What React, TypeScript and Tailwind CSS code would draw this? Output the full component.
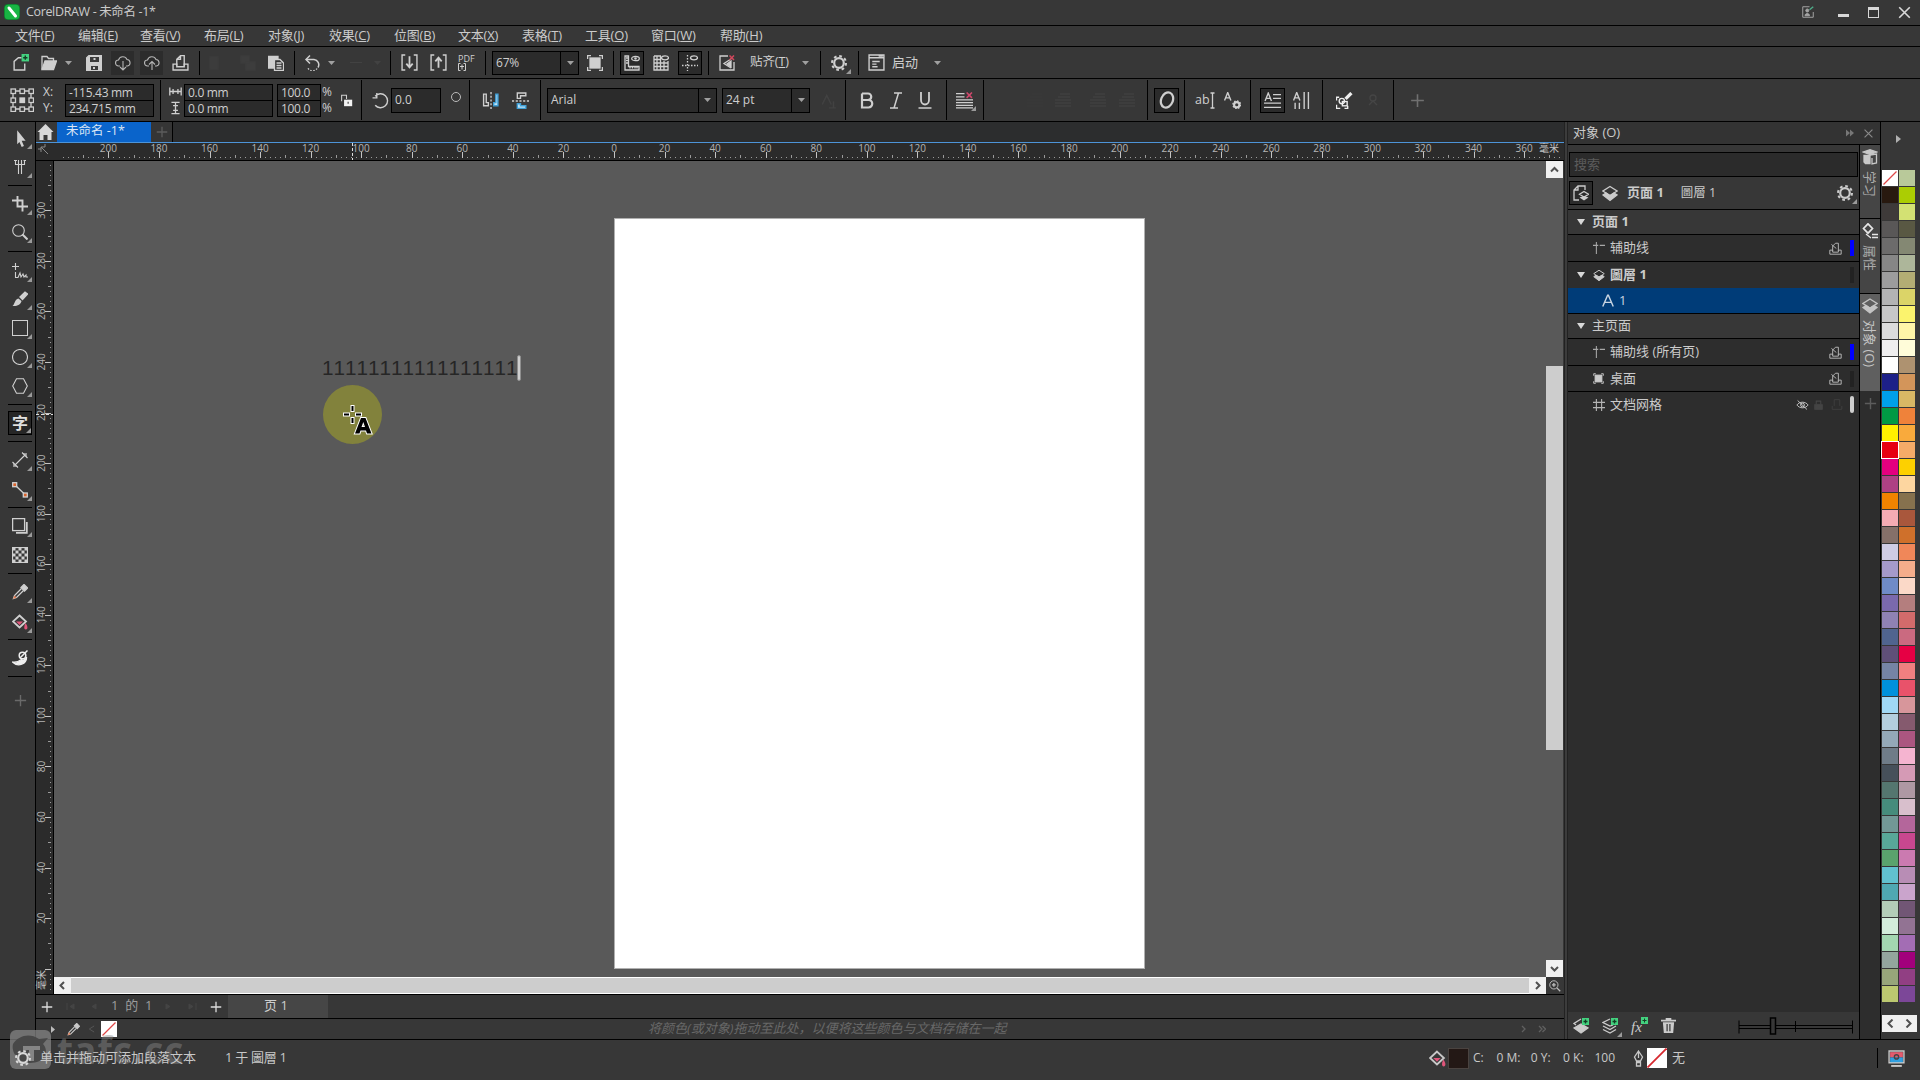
import React from "react";

const K = "'Noto Sans CJK SC', sans-serif";

type IconProps = { children: React.ReactNode; className?: string; box?: string; fill?: string };

const Ico = ({ children, className = "w-4 h-4", box = "0 0 16 16", fill = "none" }: IconProps) => (
  <svg className={`shrink-0 ${className}`} viewBox={box} fill={fill} stroke="currentColor" strokeWidth={1.3}>
    {children}
  </svg>
);

const Sep = ({ className = "" }: { className?: string }) => <div className={`w-px shrink-0 bg-black ${className}`} />;

const Caret = ({ className = "" }: { className?: string }) => (
  <svg className={`h-[4px] w-[7px] shrink-0 ${className}`} viewBox="0 0 7 4">
    <path d="M0 0H7L3.5 4Z" fill="#a0a0a0" />
  </svg>
);

const Corner = () => (
  <svg className="absolute right-0 bottom-[1px] h-[5px] w-[5px]" viewBox="0 0 5 5">
    <path d="M5 0V5H0Z" fill="#9a9a9a" />
  </svg>
);

const Gear = ({ className = "w-4 h-4" }: { className?: string }) => (
  <Ico className={className}>
    <circle cx="8" cy="8" r="4.800" strokeWidth="2.200" />
    <circle cx="8" cy="8" r="7" strokeWidth="2" strokeDasharray="2.75 2.75" />
  </Ico>
);

const Layers = ({ className = "w-4 h-4" }: { className?: string }) => (
  <Ico className={className}>
    <path d="M8 1L15 5.5L8 10L1 5.5Z" />
    <path d="M1 9.5L4 7.6L8 10.2L12 7.6L15 9.5L8 15Z" fill="currentColor" />
  </Ico>
);

const Printer = ({ className = "w-4 h-4" }: { className?: string }) => (
  <Ico className={className}>
    <path d="M1 15V9.500H4.500V12H11.500V9.500H15V15Z" />
    <path d="M4.500 11V5L8 1.500H11.500V11M8 1.500V5H4.500" />
  </Ico>
);

const Bucket = ({ className = "w-4 h-4" }: { className?: string }) => (
  <Ico className={className}>
    <path d="M7.500 1.500L14 7.500L7.500 13.500L1 7.500Z" strokeWidth="1.800" />
    <path d="M4 7.500H11L7.500 11Z" fill="#e0567b" stroke="none" />
    <path d="M13.500 9C16 12 16 15.500 13.800 15.500S12 12 13.500 9Z" fill="#e0567b" stroke="none" />
  </Ico>
);

const Eyedropper = ({ className = "w-4 h-4" }: { className?: string }) => (
  <Ico className={className}>
    <path d="M9.500 4.500L2.500 11.500L1.500 14.500L4.500 13.500L11.500 6.500" />
    <path d="M9 3.500L12.500 7L15.500 4L12 0.500Z" fill="currentColor" />
    <path d="M1 15L2.500 11.500L4.500 13.500Z" fill="#e57c52" stroke="none" />
  </Ico>
);

const Plus = ({ className = "w-4 h-4" }: { className?: string }) => (
  <Ico className={className}>
    <path d="M8 2V14M2 8H14" strokeWidth="1.500" />
  </Ico>
);

const MENUS: [string, string][] = [
  ["文件", "F"], ["编辑", "E"], ["查看", "V"], ["布局", "L"], ["对象", "J"], ["效果", "C"],
  ["位图", "B"], ["文本", "X"], ["表格", "T"], ["工具", "O"], ["窗口", "W"], ["帮助", "H"],
];

const PALETTE: [string, string][] = [
  ["none", "#b9c99a"], ["#28190f", "#abcd03"], ["#3e3a39", "#d3e173"], ["#595757", "#595843"],
  ["#6c6b6b", "#848873"], ["#868686", "#adb69a"], ["#9c9c9d", "#b3ad74"], ["#b3b3b4", "#dbd468"],
  ["#c7c7c8", "#fbf36d"], ["#dbdbdc", "#fff5a8"], ["#efeeef", "#fffcd9"], ["#ffffff", "#ae9270"],
  ["#1d2088", "#d3955a"], ["#00a0e9", "#d8b865"], ["#009944", "#ef823a"], ["#fff100", "#f9aa3c"],
  ["#e60012", "#f5ab68"], ["#e4007f", "#fdd000"], ["#ae4184", "#fdd6a0"], ["#f08300", "#86714e"],
  ["#f4abb3", "#a9573c"], ["#857069", "#cf702b"], ["#cfcce4", "#f08759"], ["#a59aca", "#f5ad8b"],
  ["#6f8bc7", "#fbd9c8"], ["#7a69ad", "#b47e7e"], ["#8f82b4", "#d26b6b"], ["#50648f", "#ca6a80"],
  ["#5f4f78", "#e60044"], ["#7584a5", "#f07f80"], ["#0091db", "#e9526a"], ["#a0d8f5", "#d7969b"],
  ["#b3cede", "#855a6e"], ["#94a9b8", "#ab5680"], ["#6f7c88", "#f5b4d0"], ["#46505a", "#d59ab5"],
  ["#54766f", "#ae98a3"], ["#468c7c", "#d8bfcc"], ["#729896", "#b4669b"], ["#58a898", "#c8478f"],
  ["#5aa36d", "#cb7ab0"], ["#61c1cf", "#b88db5"], ["#4fa8b2", "#caa4cc"], ["#b3cdb8", "#715675"],
  ["#d3ecdb", "#927393"], ["#a3d6b1", "#a36db4"], ["#93a59d", "#a2007c"], ["#97a57a", "#913f83"],
  ["#bcc870", "#7c4798"],
];

const PX = 2.528;

function TopRuler() {
  const ticks: React.ReactNode[] = [];
  for (let mm = -220; mm <= 376; mm += 2) {
    const x = 578 + mm * PX;
    if (x < 22) continue;
    const major = mm % 20 === 0;
    const h = major ? 6 : mm % 10 === 0 ? 3 : 1;
    ticks.push(<rect key={mm} x={Math.round(x)} y={15 - h} width={1} height={h} fill={major ? "#c4c4c4" : "#9a9a9a"} />);
    if (major && mm > -220 && mm < 361)
      ticks.push(
        <text key={`t${mm}`} x={x} y={9} fontSize="10" textAnchor="middle" fill="#b4b4b4">{Math.abs(mm)}</text>
      );
  }
  return (
    <svg className="block h-[17px] w-[1527px] overflow-visible" viewBox="0 0 1527 17">
      {ticks}
      <text x="1503" y="9" fontSize="10" fill="#c4c4c4" style={{ fontFamily: K }}>毫米</text>
      <path d="M5 4L12 11M5 4H9M5 4V9M9 1V4M2 6H5" stroke="#8a8a8a" fill="none" />
      <path d="M316.500 0V17" stroke="#ddd" strokeDasharray="3 2" />
    </svg>
  );
}

function SideRuler() {
  const ticks: React.ReactNode[] = [];
  for (let mm = -8; mm <= 318; mm += 2) {
    const y = 807.700 - mm * PX;
    const major = mm % 20 === 0;
    const w = major ? 6 : mm % 10 === 0 ? 3 : 1;
    ticks.push(<rect key={mm} x={15 - w} y={Math.round(y)} width={w} height={1} fill={major ? "#c4c4c4" : "#9a9a9a"} />);
    if (major && mm > 0)
      ticks.push(
        <text key={`t${mm}`} transform={`translate(9 ${y}) rotate(-90)`} fontSize="10" textAnchor="middle" fill="#b4b4b4">{mm}</text>
      );
  }
  return (
    <svg className="block h-[833px] w-[17px] overflow-visible" viewBox="0 0 17 833">
      {ticks}
      <path d="M0 253.500H17" stroke="#ddd" strokeDasharray="3 2" />
      <text transform="translate(9 829) rotate(-90)" fontSize="10" fill="#c4c4c4" style={{ fontFamily: K }}>毫米</text>
    </svg>
  );
}

const Tool = ({ children, corner = true, className = "" }: { children: React.ReactNode; corner?: boolean; className?: string }) => (
  <div className={`relative flex h-6 w-6 shrink-0 items-center justify-center ${className}`}>
    {children}
    {corner && <Corner />}
  </div>
);

const ToolSep = ({ className = "" }: { className?: string }) => <div className={`h-px w-6 shrink-0 bg-black ${className}`} />;

function Toolbox() {
  return (
    <div className="flex w-[36px] shrink-0 flex-col border-r border-black pt-[4px] pl-2 text-[#d0d0d0]">
      <Tool>
        <Ico className="h-[18px] w-[18px]"><path d="M5.500 1L13 10.500H9.500L11.500 15L9.500 16L7.500 11.500L5.500 13.500Z" fill="currentColor" stroke="none" /></Ico>
      </Tool>
      <Tool className="mt-[5px]">
        <Ico><path d="M3.500 1V5.500H12.500V1M2 1.500H5M6.500 1V5M9.500 1V5M11.500 1.500H14M6.500 5.500V15M9.500 5.500V15" strokeWidth="1.100" /></Ico>
      </Tool>
      <ToolSep className="mt-[6px]" />
      <Tool className="mt-[6px]">
        <Ico><path d="M0 4.500H5.500M5.500 0V10.500H10.500V15.500M5.500 4.500H10.500V10.500H16" strokeWidth="1.900" /></Ico>
      </Tool>
      <Tool className="mt-1">
        <Ico><circle cx="6.500" cy="6.500" r="5.800" strokeWidth="1.100" /><path d="M10.500 10.500L15.500 15.500" strokeWidth="2" /></Ico>
      </Tool>
      <ToolSep className="mt-[7px]" />
      <Tool className="mt-[7px]">
        <Ico><path d="M3.500 0V7M0 3.500H7M3.500 9V14.500H6L8 10L9 14L11 11L12 14L14 12V14H16" strokeWidth="1.100" /></Ico>
      </Tool>
      <Tool className="mt-[4px]">
        <Ico><path d="M8 6L13 1L15.500 3L10.500 8.500Z" fill="currentColor" /><path d="M6.500 7.500L9.500 10C9 13.500 5 15.500 0.500 15C3 13 2.500 8.500 6.500 7.500Z" fill="currentColor" stroke="none" /></Ico>
      </Tool>
      <Tool className="mt-[5px]"><Ico><rect x="0.500" y="0.500" width="15" height="15" strokeWidth="1" /></Ico></Tool>
      <Tool className="mt-[5px]"><Ico><circle cx="8" cy="8" r="7.500" strokeWidth="1.100" /></Ico></Tool>
      <Tool className="mt-[5px]"><Ico><path d="M4.500 0.800H11.500L15.300 8L11.500 15.200H4.500L0.700 8Z" strokeWidth="1.100" /></Ico></Tool>
      <ToolSep className="mt-[6px]" />
      <Tool className="mt-[6px] border border-black bg-[#262626] text-[16px] leading-none font-bold text-[#e0e0e0]">字</Tool>
      <ToolSep className="mt-[6px]" />
      <Tool className="mt-[6px]">
        <Ico><path d="M2.500 13.500L13.500 2.500M0.500 10L6 15.500M10 0.500L15.500 6" strokeWidth="1.100" /><path d="M1 10.500V15H5.500ZM15 5.500V1H10.500Z" fill="currentColor" stroke="none" opacity="0.600" /></Ico>
      </Tool>
      <Tool className="mt-[6px]">
        <Ico><path d="M3 3L13.500 13" /><rect x="0.700" y="0.700" width="4" height="4" fill="#d9632c" /><rect x="11.300" y="11" width="4" height="4" fill="#d9632c" /></Ico>
      </Tool>
      <ToolSep className="mt-[5px]" />
      <Tool className="mt-[6px]">
        <Ico><rect x="0.600" y="0.600" width="12" height="12" /><path d="M14.800 4V14.800H4" strokeWidth="1.800" /></Ico>
      </Tool>
      <Tool corner={false} className="mt-[5px]">
        <Ico className="h-4 w-4">
          <rect x="0.500" y="0.500" width="15" height="15" />
          {[0, 1, 2, 3, 4].map((r) =>
            [0, 1, 2, 3, 4].map((c) => (r + c) % 2 === 0 && <rect key={`${r}${c}`} x={0.500 + c * 3} y={0.500 + r * 3} width="3" height="3" fill="currentColor" stroke="none" />)
          )}
        </Ico>
      </Tool>
      <ToolSep className="mt-[6px]" />
      <Tool className="mt-[6px]"><Eyedropper /></Tool>
      <Tool className="mt-[6px]"><Bucket /></Tool>
      <ToolSep className="mt-[5px]" />
      <Tool corner={false} className="mt-[6px] text-[#eee]">
        <Ico><path d="M0.500 12C6 17.500 15 14 14.500 7C13.500 9.500 11 11 9.500 9.500C6 12 4 13 0.500 12Z" fill="currentColor" /><circle cx="10.500" cy="5.500" r="3.300" strokeWidth="1.500" /><path d="M8 8L15.500 0.500" strokeWidth="1.500" /></Ico>
      </Tool>
      <ToolSep className="mt-[6px]" />
      <Tool corner={false} className="mt-[11px] text-[#6a6a6a]"><Plus className="h-[15px] w-[15px]" /></Tool>
    </div>
  );
}

function StandardBar() {
  return (
    <div className="flex h-[32px] shrink-0 items-center border-b border-black text-[#cfcfcf]">
      <Ico className="ml-3 h-[17px] w-[17px]">
        <path d="M9 3.500H6L2 7V15H12V9" /><rect x="9" y="0" width="7" height="7" fill="#43d17f" stroke="none" /><path d="M12.500 1.500V5.500M10.500 3.500H14.500" stroke="#153d25" />
      </Ico>
      <Ico className="ml-[12px] h-4 w-4"><path d="M1 14.500V1.500H6L7.500 3.500H12.500V6" /><path d="M1 14.500L4 6H15.500L12.500 14.500Z" fill="currentColor" /></Ico>
      <Caret className="ml-[8px]" />
      <Ico className="ml-[14px] h-4 w-4"><path d="M0.500 3L3 0.500H15.500V15.500H0.500Z" fill="currentColor" /><path d="M4 2H13V7H4ZM5 11H12V15H5Z" fill="#3a3a3a" stroke="none" /><path d="M8.500 3V5M8 12V14" strokeWidth="2" /></Ico>
      <div className="ml-[9px] flex h-6 w-[23px] items-center justify-center bg-[#2c2c2c]"><Ico className="h-4 w-4"><path d="M5 11H3.500A3 3 0 0 1 3.500 5A4.500 4.500 0 0 1 12 4.500A3.300 3.300 0 0 1 12.500 11H11M8 6V15M5 12L8 15L11 12" strokeWidth="1.100" stroke="#b5b5b5" /></Ico></div>
      <div className="ml-[6px] flex h-6 w-[23px] items-center justify-center bg-[#2c2c2c]"><Ico className="h-4 w-4"><path d="M5 11H3.500A3 3 0 0 1 3.500 5A4.500 4.500 0 0 1 12 4.500A3.300 3.300 0 0 1 12.500 11H11M8 15V6.500M5 9.500L8 6.500L11 9.500" strokeWidth="1.100" stroke="#b5b5b5" /></Ico></div>
      <Printer className="ml-[9px] h-[17px] w-[17px]" />
      <Sep className="ml-[10px] h-6" />
      <Ico className="ml-[8px] h-4 w-4 text-[#3c3c3c]"><path d="M2 2H10V14H2Z" fill="currentColor" /></Ico>
      <Ico className="ml-[16px] h-4 w-4 text-[#3d3d3d]"><path d="M1 1H9V8H1ZM6 7H15V15H6Z" fill="currentColor" /></Ico>
      <Ico className="ml-[12px] h-4 w-4"><path d="M0.500 1.500H10V4H6V13H0.500Z" fill="currentColor" /><path d="M6.500 4.500H12L15.500 8V15.500H6.500Z" fill="#333" /><path d="M8.500 8H13.500M8.500 10.500H13.500M8.500 13H13.500" /></Ico>
      <Sep className="ml-[10px] h-6" />
      <Ico className="ml-[9px] h-4 w-4"><path d="M2 4.500H10A5.300 5.300 0 0 1 14 12.500" strokeWidth="1.500" /><path d="M13 13.500A5.300 5.300 0 0 1 3.500 12" strokeDasharray="1.500 1.500" /><path d="M6 0.500L2 4.500L6 8.500" strokeWidth="1.500" /></Ico>
      <Caret className="ml-[8px]" />
      <div className="ml-[15px] h-px w-3 bg-[#424242]" />
      <Caret className="ml-[12px] opacity-10" />
      <Sep className="ml-[9px] h-6" />
      <Ico className="ml-[10px] h-[17px] w-[17px]"><path d="M4 1H1V15H4M12 1H15V15H12" /><path d="M8 2V12M5 9L8 12.500L11 9" strokeWidth="1.700" /></Ico>
      <Ico className="ml-[12px] h-[17px] w-[17px]"><path d="M4 1H1V15H4M12 1H15V15H12" /><path d="M8 13V3.500M5 7L8 3.500L11 7" strokeWidth="1.700" /></Ico>
      <div className="ml-[11px] flex w-[18px] flex-col items-start">
        <span className="text-[9px] leading-[9px]">PDF</span>
        <Ico className="h-[8px] w-[8px]"><path d="M5 1H1V15H5M11 1H15V15H11M8 3V13M4 7H12" strokeWidth="2" /></Ico>
      </div>
      <Sep className="ml-[9px] h-6" />
      <div className="ml-[6px] flex h-6 w-[87px] items-center border border-black bg-[#2b2b2b]">
        <span className="w-[67px] pl-[3px] text-[12px] tracking-[-0.2px]">67%</span>
        <Sep className="h-full" />
        <Caret className="ml-[6px]" />
      </div>
      <Ico className="ml-[8px] h-4 w-4"><rect x="3" y="3" width="10" height="10" fill="currentColor" /><path d="M0.600 4V0.600H4M12 0.600H15.400V4M15.400 12V15.400H12M4 15.400H0.600V12" /></Ico>
      <Sep className="ml-[10px] h-6" />
      <div className="ml-[6px] flex h-6 w-6 items-center justify-center border border-black bg-[#2b2b2b]">
        <Ico className="h-4 w-4"><path d="M1 1H4.500V11.500H15V15H1Z" /><path d="M2 3H4M2 5.500H4M2 8H4M6 13.500V12M8.500 13.500V12M11 13.500V12M13 13.500V12" /><ellipse cx="11.500" cy="3.500" rx="3.800" ry="2.200" /><circle cx="11.500" cy="3.500" r="0.700" /></Ico>
      </div>
      <Ico className="ml-[9px] h-4 w-4"><path d="M1 1V15H15V6M1 1H8M4 1V15M7.500 1V15M11 6V15M1 4.500H8M1 8H15M1 11.500H15" /><ellipse cx="12" cy="2.800" rx="3.500" ry="2" /></Ico>
      <div className="ml-[9px] flex h-6 w-6 items-center justify-center border border-black bg-[#2b2b2b]">
        <Ico className="h-4 w-4"><path d="M5.500 0V16M0 10.500H16" strokeDasharray="1.500 1.500" /><ellipse cx="12" cy="2.800" rx="3.500" ry="2" /></Ico>
      </div>
      <Sep className="ml-[6px] h-6" />
      <Ico className="ml-[10px] h-4 w-4"><path d="M9 1H1V15H15V7" /><path d="M12 4L5 8.500L12 13" /><path d="M12 6V12L8 9Z" fill="currentColor" /><path d="M10.500 0.500L15 5M15 0.500L10.500 5" stroke="#d0485c" strokeWidth="1.500" /></Ico>
      <span className="ml-[15px] w-[41px] text-[12.500px] whitespace-nowrap tracking-[-0.1px]">贴齐(<u>T</u>)</span>
      <Caret className="ml-[11px]" />
      <Sep className="ml-[11px] h-6" />
      <div className="relative ml-[10px] flex h-6 w-[20px] items-center"><Gear className="h-[16px] w-[16px]" /><Corner /></div>
      <Sep className="ml-[7px] h-6" />
      <Ico className="ml-[9px] h-[17px] w-[17px]"><path d="M1 1H15V15H1ZM1 3.500H15M10 2H14M4 7H11M4 9.500H8M4 12H9" /></Ico>
      <span className="ml-[7px] w-[26px] text-[13px]">启动</span>
      <Caret className="ml-[16px]" />
    </div>
  );
}

const Box = ({ children, className = "" }: { children: React.ReactNode; className?: string }) => (
  <div className={`flex shrink-0 items-center border border-black bg-[#2b2b2b] text-[12px] whitespace-nowrap ${className}`}>{children}</div>
);

const Pair = ({ a, b, className }: { a: string; b: string; className: string }) => (
  <div className={`flex h-[33px] shrink-0 flex-col border border-black bg-[#2b2b2b] text-[12px] leading-[15px] tracking-[-0.3px] whitespace-nowrap ${className}`}>
    <span className="h-4 border-b border-black pl-[3px]">{a}</span>
    <span className="pl-[3px]">{b}</span>
  </div>
);

const Lines = ({ className }: { className: string }) => (
  <Ico className={`h-4 w-4 text-[#404040] ${className}`}><path d="M5 2H15M3 5H15M0 8H16M0 11H16M0 14H16" /></Ico>
);

function PropertyBar() {
  return (
    <div className="flex h-[43px] shrink-0 items-center border-b border-black text-[#cfcfcf]">
      <Ico className="ml-[10px] h-6 w-6" box="0 0 24 24">
        {[0, 1, 2].map((r) =>
          [0, 1, 2].map((c) => <rect key={`${r}${c}`} x={1 + c * 9} y={1 + r * 9} width="4.500" height="4.500" fill={r === 1 && c === 1 ? "currentColor" : "none"} />)
        )}
        <path d="M6 3H10M15 3H19M6 21H10M15 21H19M3 6V10M3 15V19M21 6V10M21 15V19" />
      </Ico>
      <div className="ml-[9px] w-[22px] text-[12px] leading-[16px]">X:<br />Y:</div>
      <Pair className="w-[89px]" a="-115.43 mm" b="234.715 mm" />
      <Sep className="ml-[6px] h-[40px]" />
      <div className="ml-[8px] flex flex-col items-center gap-[3px]">
        <Ico className="h-[13px] w-[13px]"><path d="M1 3V13M15 3V13M1 8H15M5 5V11M11 5V11" strokeWidth="1.600" /></Ico>
        <Ico className="h-[14px] w-[13px]"><path d="M3 1H13M3 15H13M8 1V15M5 5H11M5 11H11" strokeWidth="1.600" /></Ico>
      </div>
      <Pair className="ml-[2px] w-[89px]" a="0.0 mm" b="0.0 mm" />
      <Pair className="ml-[4px] w-[44px]" a="100.0" b="100.0" />
      <div className="ml-[1px] w-[13px] text-[12px] leading-[16px]">%<br />%</div>
      <Ico className="ml-[5px] h-[15px] w-[13px]"><path d="M2 9V1.500H8V6" /><rect x="5" y="7" width="10" height="8" fill="#f2f2f2" stroke="none" /><path d="M10 9.500V12" stroke="#333" /></Ico>
      <Sep className="ml-[8px] h-[40px]" />
      <Ico className="ml-[10px] h-[17px] w-[17px]"><path d="M3 4A6.600 6.600 0 1 1 3 12.500M0.500 5.500H4.500V1" /></Ico>
      <Box className="ml-[2px] h-[25px] w-[50px] pl-[3px]">0.0</Box>
      <div className="mb-[6px] ml-[10px] h-[10px] w-[10px] rounded-full border border-[#bbb]" />
      <Sep className="ml-[8px] h-[40px]" />
      <Ico className="ml-[12px] h-[17px] w-[17px]"><path d="M1.500 2V13H6V10H4V2Z" /><path d="M8.500 0V16" strokeDasharray="2 1.500" /><path d="M15 2V13H11V10H13V2Z" fill="#bfe2f5" stroke="#3f9fd6" /></Ico>
      <Ico className="ml-[13px] h-[17px] w-[17px]"><path d="M13 1H5V6H8V3.500H13Z" /><path d="M0 8.500H16" strokeDasharray="2 1.500" /><path d="M5 11H8V13H13V15.500H5Z" fill="#bfe2f5" stroke="#3f9fd6" /></Ico>
      <Sep className="ml-[11px] h-[40px]" />
      <Box className="ml-[6px] h-[25px] w-[170px]"><span className="w-[150px] pl-[3px]">Arial</span><Sep className="h-full" /><Caret className="ml-[5px]" /></Box>
      <Box className="ml-[5px] h-[25px] w-[88px]"><span className="w-[68px] pl-[3px]">24 pt</span><Sep className="h-full" /><Caret className="ml-[6px]" /></Box>
      <Ico className="ml-[9px] h-[18px] w-[20px] text-[#424242]"><path d="M2 12L6 4L10 12M8 15H14M12 9V15" /></Ico>
      <Sep className="ml-[6px] h-[40px]" />
      <Ico className="ml-[14px] h-[17px] w-[14px]" box="0 0 14 17"><path d="M2 1.500H8A3.200 3.200 0 0 1 8 8H2V1.500M2 8H8.500A3.600 3.600 0 0 1 8.500 15.500H2V8" strokeWidth="2.200" /></Ico>
      <Ico className="ml-[15px] h-[17px] w-[14px]" box="0 0 14 17"><path d="M5 1H13M1 16H9M9.500 1L5 16" strokeWidth="1.500" /></Ico>
      <Ico className="ml-[15px] h-[17px] w-[14px]" box="0 0 14 17"><path d="M3 0V8A4 4.500 0 0 0 11 8V0" strokeWidth="1.800" /><path d="M0.500 16H13.500" strokeWidth="1.500" /></Ico>
      <Sep className="ml-[14px] h-[40px]" />
      <div className="relative ml-[9px] flex h-6 w-[20px] items-center">
        <Ico className="h-[17px] w-[17px]"><path d="M0 1.500H8M0 4.500H8M0 7.500H16M0 10H16M0 12.500H16M0 15H16" strokeWidth="1.200" /><path d="M10 0.500L15 5.500M15 0.500L10 5.500" stroke="#d0486c" strokeWidth="1.500" /></Ico>
        <Corner />
      </div>
      <Sep className="ml-[7px] h-[40px]" />
      <Lines className="ml-[43px] opacity-30" />
      <Lines className="ml-[12px]" />
      <Lines className="ml-[19px]" />
      <Lines className="ml-[13px]" />
      <Sep className="ml-[12px] h-[40px]" />
      <Box className="ml-[6px] h-[25px] w-[25px] justify-center"><Ico className="h-[18px] w-[18px]"><ellipse cx="8" cy="8" rx="5.200" ry="7" transform="rotate(22 8 8)" strokeWidth="2" /></Ico></Box>
      <Sep className="ml-[5px] h-[40px]" />
      <span className="ml-[10px] flex w-[18px] items-center text-[12.500px] leading-none">ab<Ico className="h-[17px] w-[5px]" box="0 0 5 17"><path d="M0.500 1H4.500M2.500 1V16M0.500 16H4.500" /></Ico></span>
      <Ico className="ml-[11px] h-[17px] w-[17px]"><path d="M0.500 8L3.500 0.500L6.500 8M1.500 5.500H5.500" /><circle cx="12" cy="12" r="2.500" strokeWidth="2" /><circle cx="12" cy="12" r="3.600" strokeDasharray="1.400 1.400" /></Ico>
      <Sep className="ml-[9px] h-[40px]" />
      <Box className="ml-[9px] h-[25px] w-[25px] justify-center"><Ico className="h-[17px] w-[17px]"><path d="M1 8.500L4 1L7 8.500M2 6H6M8.500 2.500H16M8.500 6H16M0 10.500H16M0 14.500H16" /></Ico></Box>
      <Ico className="ml-[8px] h-[17px] w-[17px]"><path d="M0.500 8L3.500 0.500L6.500 8M1.500 5.500H5.500M2 10V16M6 10V16M10.500 0V16M14.500 0V16" /></Ico>
      <Sep className="ml-[12px] h-[40px]" />
      <Ico className="ml-[13px] h-[17px] w-[17px] text-[#eee]"><path d="M0.500 8V5H3M0.500 12V15.500H4M8 15.500H11V13" /><circle cx="5.500" cy="8.500" r="2.500" /><rect x="6" y="9" width="4.500" height="4" /><path d="M9 6.500L14.500 1" strokeWidth="3" /></Ico>
      <Ico className="ml-[12px] h-4 w-4 text-[#454545]"><circle cx="8" cy="6" r="3" /><path d="M4 13L8 9L12 13" /></Ico>
      <Sep className="ml-[12px] h-[40px]" />
      <Plus className="ml-[15px] h-[17px] w-[17px] text-[#707070]" />
    </div>
  );
}

const ScrollArrow = ({ d, className }: { d: string; className: string }) => (
  <div className={`flex shrink-0 items-center justify-center bg-[#f0f0f0] text-[#505050] ${className}`}>
    <Ico className="h-[9px] w-[9px]" box="0 0 9 9"><path d={d} strokeWidth="2" /></Ico>
  </div>
);

const Nul = ({ className }: { className: string }) => (
  <svg className={`block shrink-0 bg-white ${className}`} viewBox="0 0 16 16"><path d="M1.500 14.500L14.500 1.500" stroke="#e04848" strokeWidth="1.200" /></svg>
);

function Canvas() {
  return (
    <div className="relative h-[816px] w-[1492px] overflow-hidden bg-[#595959]">
      <div className="absolute top-[57px] left-[560px] h-[751px] w-[531px] border border-[#b0b0b0] bg-white" />
      <span className="absolute top-[194px] left-[268px] text-[20.700px] leading-[26px] whitespace-nowrap text-[#262626] [font-kerning:none]" style={{ fontFamily: "'Liberation Sans', sans-serif" }}>11111111111111111</span>
      <div className="absolute top-[194px] left-[463px] h-[26px] w-[4px] rounded-sm border border-[#8f8f8f] bg-[#cfcfcf]" />
      <div className="absolute top-[224px] left-[269px] h-[59px] w-[59px] rounded-full bg-[#82823c]" />
      <svg className="absolute top-[243px] left-[288px] h-[34px] w-[34px]" viewBox="0 0 34 34">
        <path d="M10.500 1V8M10.500 13V20M1 10.500H8M13 10.500H20" stroke="#fff" strokeWidth="4" />
        <path d="M10.500 2V7M10.500 14V19M2 10.500H7M14 10.500H19" stroke="#000" strokeWidth="2" />
        <path d="M13 29.500L19 14H23.500L29.500 29.500H25L24 26.500H18.500L17.500 29.500ZM19.500 23H23L21.300 18Z" fill="#000" stroke="#fff" strokeWidth="2" paintOrder="stroke" />
      </svg>
    </div>
  );
}

const Nav = ({ d, className }: { d: string; className: string }) => (
  <svg className={`h-[7px] w-[9px] shrink-0 ${className}`} viewBox="0 0 9 7"><path d={d} fill="#444" stroke="#444" /></svg>
);

function Workspace() {
  return (
    <div className="flex w-[1528px] shrink-0 flex-col">
      <div className="flex h-[20px] shrink-0 items-center bg-[#2c2d2e]">
        <div className="flex h-5 w-[21px] items-center bg-[#383838] pl-[1px]">
          <Ico className="h-4 w-[17px] text-[#d8d8d8]"><path d="M8 0L16 8H14V16H10V11H6V16H2V8H0Z" fill="currentColor" stroke="none" /></Ico>
        </div>
        <div className="flex h-5 w-[94px] items-center bg-[#0a64cb] pb-[1px] pl-[9px] text-[12.500px] whitespace-nowrap text-[#dbe6f5]">未命名&nbsp;-1*</div>
        <div className="flex h-5 w-[22px] items-center justify-center border-r border-black bg-[#353535] text-[#5c5c5c]"><Plus className="h-3.5 w-3.5" /></div>
      </div>
      <div className="h-px shrink-0 bg-[#4d94d8]" />
      <div className="h-[18px] shrink-0 border-b border-black bg-[#2b2b2b]"><TopRuler /></div>
      <div className="flex h-[833px] shrink-0">
        <div className="w-[18px] shrink-0 border-r border-black bg-[#2b2b2b]"><SideRuler /></div>
        <div className="flex flex-col">
          <div className="flex">
            <Canvas />
            <div className="flex w-[17px] flex-col bg-[#595959]">
              <ScrollArrow className="h-[17px]" d="M1 6.500L4.500 3L8 6.500" />
              <div className="mt-[188px] h-[384px] bg-[#cdcdcd]" />
              <ScrollArrow className="mt-auto h-[17px]" d="M1 3L4.500 6.500L8 3" />
            </div>
          </div>
          <div className="flex h-[17px]">
            <ScrollArrow className="w-[17px]" d="M6 1L2.500 4.500L6 8" />
            <div className="w-[1458px] border-y border-white bg-[#cdcdcd]" />
            <ScrollArrow className="w-[17px]" d="M3 1L6.500 4.500L3 8" />
            <div className="flex w-[17px] items-center justify-center text-[#bbb]">
              <Ico className="h-3 w-3"><circle cx="6.500" cy="6.500" r="5.500" /><path d="M10.500 10.500L15 15M6.500 4V9M4 6.500H9" strokeWidth="1.800" /></Ico>
            </div>
          </div>
        </div>
      </div>
      <div className="flex h-[25px] shrink-0 items-center border-y border-black text-[13px] text-[#9c9c9c]">
        <Plus className="ml-[4px] h-[14px] w-[14px] text-[#ddd]" />
        <Nav className="ml-[12px]" d="M1 0V7M8 1V6L4 3.500Z" />
        <Nav className="ml-[15px]" d="M6 1V6L2 3.500Z" />
        <span className="ml-[12px] w-[42px] pb-[1px] whitespace-nowrap">1&nbsp; 的&nbsp; 1</span>
        <Nav className="ml-[11px]" d="M2 1V6L6 3.500Z" />
        <Nav className="ml-[15px]" d="M8 0V7M1 1V6L5 3.500Z" />
        <Plus className="ml-[12px] h-[14px] w-[14px] text-[#ddd]" />
        <div className="ml-[5px] flex h-full w-[100px] items-center justify-center bg-[#464646] pr-1 pb-[1px] text-[#cfcfcf]">页 1</div>
      </div>
      <div className="flex h-[20px] shrink-0 items-center">
        <svg className="ml-[15px] h-[7px] w-[4px]" viewBox="0 0 4 7"><path d="M0 0L4 3.500L0 7Z" fill="#bbb" /></svg>
        <Eyedropper className="ml-[12px] h-[13px] w-[13px] text-[#c9c9c9]" />
        <Ico className="ml-[8px] h-[8px] w-[7px] text-[#5a5a5a]"><path d="M14 1L3 8L14 15" strokeWidth="2" /></Ico>
        <Nul className="ml-[6px] h-4 w-4" />
        <span className="ml-[531px] w-[873px] text-[13px] whitespace-nowrap text-[#686868] italic">将颜色(或对象)拖动至此处，以便将这些颜色与文档存储在一起</span>
        <Ico className="h-[8px] w-[5px] text-[#606060]" box="0 0 5 8"><path d="M1 1L4 4L1 7" /></Ico>
        <Ico className="ml-[12px] h-[8px] w-[8px] text-[#606060]" box="0 0 8 8"><path d="M1 1L4 4L1 7M4.500 1L7.500 4L4.500 7" /></Ico>
      </div>
    </div>
  );
}

const Row = ({ children, className = "" }: { children: React.ReactNode; className?: string }) => (
  <div className={`flex shrink-0 items-center border-black text-[13px] whitespace-nowrap ${className}`}>{children}</div>
);

const Tri = () => (
  <svg className="mr-[7px] ml-[9px] h-[6px] w-[8px]" viewBox="0 0 8 6"><path d="M0 0H8L4 6Z" fill="#d8d8d8" /></svg>
);

const GuideIcon = () => (
  <Ico className="mr-[5px] ml-[25px] h-3 w-3 text-[#a8a8a8]"><path d="M4.500 0V16M0 4.500H7M9 4.500H16" strokeWidth="1.400" /></Ico>
);

const PrintOff = () => (
  <Ico className="ml-auto h-[13px] w-[13px] text-[#b5b5b5]"><path d="M1 15V10H4.500V12.500H11.500V10H15V15ZM4.500 11V5L8 1.500H11.500V11M3 3L9 8" strokeWidth="1.200" /></Ico>
);

function ObjectPanel() {
  return (
    <div className="flex w-[292px] flex-col border-r border-black bg-[#2d2d2d]">
      <div className="h-[65px] shrink-0 border-b border-black bg-[#373737] px-[1px] pt-[7px]">
        <div className="flex h-[25px] items-center border border-black bg-[#2b2b2b] pl-[4px] text-[13px] text-[#5c5c5c]">搜索</div>
        <div className="flex h-[32px] items-center">
          <div className="flex h-6 w-6 items-center justify-center border border-black bg-[#2b2b2b]">
            <Ico className="h-4 w-4"><path d="M6 15H1V5L5 1H12V5M5 1V5H1" /><path d="M11 6.500L15.500 9.300L11 12L6.500 9.300Z" /><path d="M6.500 12.500L11 11L15.500 12.500L11 15.500Z" fill="currentColor" stroke="none" /></Ico>
          </div>
          <Layers className="ml-[9px] h-[17px] w-4" />
          <span className="ml-[9px] text-[13px] font-bold">页面 1</span>
          <span className="ml-[17px] text-[12.500px]">圖層 1</span>
          <div className="relative mr-[1px] ml-auto flex h-6 w-[20px] items-center"><Gear className="h-[16px] w-[16px]" /><Corner /></div>
        </div>
      </div>
      <Row className="h-[25px] border-b bg-[#373737] font-bold"><Tri />页面 1</Row>
      <Row className="h-[27px] border-b"><GuideIcon />辅助线<PrintOff /><div className="mr-[5px] ml-[8px] h-4 w-1 bg-[#0000ff]" /></Row>
      <Row className="h-[26px] font-bold"><Tri /><Layers className="mr-[5px] ml-[1px] h-[13px] w-3" />圖層 1<div className="mr-[5px] ml-auto h-4 w-1 bg-[#222]" /></Row>
      <Row className="h-[26px] border-b bg-[#003c78] pl-[34px] text-[#c9d5e2]">
        <Ico className="mr-[5px] h-[13px] w-[12px]"><path d="M1 16L7.500 1H8.500L15 16M3.500 10.500H12.500" strokeWidth="1.900" /></Ico>1
      </Row>
      <Row className="h-[25px] border-b bg-[#373737]"><Tri />主页面</Row>
      <Row className="h-[27px] border-b"><GuideIcon />辅助线 (所有页)<PrintOff /><div className="mr-[5px] ml-[8px] h-4 w-1 bg-[#0000ff]" /></Row>
      <Row className="h-[26px] border-b">
        <Ico className="mr-[6px] ml-[25px] h-[11px] w-[11px]"><rect x="3" y="3" width="10" height="10" fill="currentColor" /><path d="M1 4V1H4M12 1H15V4M15 12V15H12M4 15H1V12" /></Ico>
        桌面<PrintOff /><div className="mr-[5px] ml-[8px] h-4 w-1 bg-[#222]" />
      </Row>
      <Row className="h-[26px] pb-[1px]">
        <Ico className="mr-[5px] ml-[25px] h-3 w-3 text-[#b5b5b5]"><path d="M4.500 0V16M11.500 0V16M0 4.500H16M0 11.500H16" strokeWidth="1.500" /></Ico>
        文档网格
        <Ico className="ml-auto h-3 w-[13px]"><path d="M0.500 8C4 3 12 3 15.500 8C12 13 4 13 0.500 8ZM1.500 2L14 14" strokeWidth="1.200" /><circle cx="8" cy="8" r="2.500" /></Ico>
        <Ico className="ml-[5px] h-[10px] w-[9px] text-[#444]"><path d="M1 7H15V16H1Z" fill="currentColor" /><path d="M4 7V1H12V7" strokeWidth="2" /></Ico>
        <Ico className="ml-[8px] h-[11px] w-3 text-[#404040]"><path d="M1 10V15H15V10M4 10V1H12V10" /></Ico>
        <div className="mr-[5px] ml-[7px] h-[17px] w-1 rounded-sm bg-[#cfcfcf]" />
      </Row>
      <div className="mt-auto flex h-[27px] shrink-0 items-center bg-[#373737]">
        <Ico className="ml-[5px] h-4 w-4"><path d="M8 1L1 5.500L3 7" /><path d="M1 10L8 6L15 10L8 15Z" fill="currentColor" /><rect x="9" y="0" width="7" height="7" fill="#43d17f" stroke="none" /><path d="M12.500 1.500V5.500M10.500 3.500H14.500" stroke="#153d25" /></Ico>
        <div className="relative ml-[13px] flex h-6 w-[20px] items-center"><Ico className="h-4 w-4"><path d="M8 1L1 4.500L8 8L11 7M1 8L8 11.500L14 8M1 11.500L8 15L14 11.500" /><rect x="9" y="0" width="7" height="7" fill="#43d17f" stroke="none" /><path d="M12.500 1.500V5.500M10.500 3.500H14.500" stroke="#153d25" /></Ico><Corner /></div>
        <div className="relative ml-[9px] flex h-5 w-[17px] items-end text-[15px] leading-[18px] italic" style={{ fontFamily: "'Liberation Serif', serif" }}>
          fx
          <svg className="absolute top-[1px] right-0 h-[7px] w-[7px]" viewBox="0 0 7 7"><rect width="7" height="7" fill="#43d17f" /><path d="M3.500 1.500V5.500M1.500 3.500H5.500" stroke="#153d25" /></svg>
        </div>
        <Ico className="ml-[13px] h-[17px] w-[15px]"><path d="M0 2.800H16M5 1H11" strokeWidth="1.800" /><path d="M2 4.500H14L13 16H3Z" fill="currentColor" stroke="none" /><path d="M6.500 6.500V14M9.500 6.500V14" stroke="#373737" /></Ico>
        <svg className="ml-[62px] h-[18px] w-[117px] shrink-0" viewBox="0 0 117 18">
          <path d="M1 3.500V16.500M57.500 4V15M114.500 3.500V16.500M1 8.500H114M1 11.500H114" stroke="#000" fill="none" />
          <rect x="32.500" y="1" width="5" height="16" fill="#373737" stroke="#000" strokeWidth="1.500" />
        </svg>
      </div>
    </div>
  );
}

const SideTab = ({ icon, label, className }: { icon: React.ReactNode; label: string; className: string }) => (
  <div className={`flex w-5 shrink-0 flex-col items-center gap-[6px] pt-[4px] text-[13px] leading-5 [text-orientation:sideways] ${className}`}>
    {icon}
    <span className="whitespace-nowrap [writing-mode:vertical-rl]">{label}</span>
  </div>
);

function RightDock() {
  return (
    <div className="flex w-[313px] shrink-0 flex-col border-r border-black bg-[#2d2d2d] text-[#cbcbcb]">
      <div className="flex h-[23px] shrink-0 items-center border-b border-black bg-[#333]">
        <span className="ml-[5px] pb-[1px] text-[13px] whitespace-nowrap">对象 (O)</span>
        <Ico className="ml-auto h-[8px] w-[10px] text-[#777]"><path d="M0 1L8 8L0 15ZM8 1L16 8L8 15Z" fill="currentColor" stroke="none" /></Ico>
        <Ico className="mr-[7px] ml-[9px] h-[9px] w-[9px] text-[#8a8a8a]"><path d="M1 1L15 15M15 1L1 15" strokeWidth="2" /></Ico>
      </div>
      <div className="flex flex-1">
        <ObjectPanel />
        <div className="flex w-5 flex-col">
          <SideTab className="h-[74px] border-b border-black bg-[#454545] text-[#aaa]" label="学习" icon={<Ico className="h-4 w-4 text-[#c8c8c8]"><path d="M1 3L8 0.800L15 3L8 5.500Z" fill="currentColor" /><path d="M2 6.500H8V14.500H3.500L2 13Z" fill="currentColor" /><path d="M8 6L14.500 5V14L10 15V9" /></Ico>} />
          <SideTab className="h-[75px] border-b border-black bg-[#454545] text-[#aaa]" label="属性" icon={<Ico className="h-4 w-4 text-[#e6e6e6]"><path d="M6 0.800L10.500 5.500L6 10.200L1.500 5.500Z" strokeWidth="1.700" /><path d="M4 11L9 15M10 11.500H16M10 14.500H16" /></Ico>} />
          <SideTab className="h-[97px] bg-[#5f5f5f] text-[#c4c4c4]" label="对象 (O)" icon={<Layers />} />
          <div className="flex h-6 items-center justify-center text-[#5c5c5c]"><Plus className="h-[15px] w-[15px]" /></div>
        </div>
      </div>
    </div>
  );
}

function ColorPalette() {
  return (
    <div className="flex w-[39px] shrink-0 flex-col pl-[1px]">
      <div className="flex h-[48px] shrink-0 items-start pt-[13px] pl-[14px]">
        <svg className="h-[8px] w-[5px]" viewBox="0 0 5 8"><path d="M0 0L5 4L0 8Z" fill="#b0b0b0" /></svg>
      </div>
      <div className="grid shrink-0 grid-cols-[16px_16px] gap-px">
        {PALETTE.map(([a, b], i) => (
          <React.Fragment key={i}>
            {a === "none" ? <Nul className="h-4 w-4" /> : <div className={i === 16 ? "h-4 outline outline-1 outline-white" : "h-4"} style={{ backgroundColor: a }} />}
            <div className="h-4" style={{ backgroundColor: b }} />
          </React.Fragment>
        ))}
      </div>
      <div className="mt-[13px] flex h-[17px] w-[35px]">
        <ScrollArrow className="flex-1" d="M6.500 0.500L2.500 4.500L6.500 8.500" />
        <ScrollArrow className="flex-1" d="M2.500 0.500L6.500 4.500L2.500 8.500" />
      </div>
    </div>
  );
}

function StatusBar() {
  return (
    <div className="relative flex h-[40px] shrink-0 items-center pb-[4px] text-[13px] whitespace-nowrap text-[#c8c8c8]">
      <div className="absolute -top-[10px] left-[10px] flex h-[39px] items-center">
        <svg className="h-[39px] w-[41px]" viewBox="0 0 41 39">
          <rect width="41" height="39" rx="6" fill="#8a8a8a" opacity="0.700" />
          <path d="M3 14C9 5 20 3 29 9L38 8L33 14C40 22 34 33 20 33C8 33 1 22 3 14Z" fill="#484848" />
          <path d="M13 16H30V20H24V31H19V20H13Z" fill="#858585" />
        </svg>
        <span className="ml-[6px] text-[37px] leading-none font-bold tracking-[1px] text-[#8a8a8a]/45">tafc.cc</span>
      </div>
      <div className="relative ml-[15px] flex w-[25px] items-center"><Gear className="h-4 w-4 text-[#d8d8d8]" /></div>
      <span className="relative w-[185px]">单击并拖动可添加段落文本</span>
      <span className="w-[60px] tracking-[-0.3px]">1 于 圖層 1</span>
      <Bucket className="ml-[1144px] h-[17px] w-[17px]" />
      <div className="ml-[2px] h-[21px] w-[21px] border border-[#4a4340] bg-[#231815]" />
      <div className="ml-[4px] flex w-[142px] text-[12px]">
        <span className="w-[24px]">C:</span><span className="w-[35px]">0 M:</span><span className="w-[33px]">0 Y:</span><span className="w-[32px]">0 K:</span><span>100</span>
      </div>
      <Ico className="ml-[18px] h-[17px] w-[11px]" box="0 0 11 17"><path d="M5.500 1L9.500 7L7.500 11H3.500L1.500 7ZM5.500 3V8M3.500 12.500H7.500V16H3.500Z" /></Ico>
      <svg className="ml-[3px] h-[20px] w-[20px] bg-white" viewBox="0 0 20 20"><path d="M0.500 19.500L19.500 0.500" stroke="#d7282f" strokeWidth="1.800" /></svg>
      <span className="ml-[5px]">无</span>
      <Sep className="ml-[192px] h-5" />
      <Ico className="ml-[10px] h-[17px] w-[17px]"><path d="M1 1H15V12H1Z" /><rect x="2" y="2" width="12" height="5" fill="#e35b6d" stroke="none" /><rect x="2" y="7" width="12" height="4.500" fill="#2f9fe0" stroke="none" /><circle cx="8" cy="6.500" r="2" stroke="#444" /><path d="M3 15H13" strokeWidth="1.800" /></Ico>
    </div>
  );
}

export default function App() {
  return (
    <div className="flex h-[1080px] w-[1920px] flex-col overflow-hidden bg-[#373737] text-[#cbcbcb]" style={{ fontFamily: "'Open Sans', 'Noto Sans CJK SC', sans-serif" }}>
      <div className="flex h-[26px] shrink-0 items-center border-b border-black pb-[1px] text-[12.500px]">
        <svg className="ml-[4px] h-4 w-4" viewBox="0 0 16 16"><rect width="16" height="16" rx="4" fill="#0e7a2c" /><rect x="0.700" y="0.700" width="14.600" height="14.600" rx="3.500" fill="#18b443" /><path d="M5 4L11.500 12" stroke="#fff" strokeWidth="3" strokeLinecap="round" /></svg>
        <span className="ml-[6px] whitespace-nowrap tracking-[-0.35px]">CorelDRAW - 未命名 -1*</span>
        <Ico className="ml-auto h-3 w-3 text-[#a5a5a5]"><path d="M10 1H1V15H15V8" /><circle cx="7" cy="6" r="2" fill="currentColor" /><path d="M4 13C4 9 10 9 10 13Z" fill="currentColor" /><path d="M10 5L15 1" stroke="#4fae8a" strokeWidth="2" /></Ico>
        <div className="mt-[7px] ml-[24px] h-[3px] w-[11px] bg-[#d8d8d8]" />
        <div className="ml-[19px] h-[11px] w-[11px] border border-t-[3px] border-[#d8d8d8]" />
        <Ico className="mr-[9px] ml-[19px] h-[13px] w-[13px] text-[#d8d8d8]"><path d="M1.500 1.500L14.500 14.500M14.500 1.500L1.500 14.500" strokeWidth="2" /></Ico>
      </div>
      <div className="grid h-[21px] shrink-0 grid-cols-[63px_62px_64px_64px_61px_65px_64px_64px_63px_66px_69px_60px] items-center border-b border-black pl-[15px] text-[13px]">
        {MENUS.map(([name, key]) => (
          <span key={key} className="whitespace-nowrap tracking-[-0.2px]">{name}(<u>{key}</u>)</span>
        ))}
      </div>
      <StandardBar />
      <PropertyBar />
      <div className="flex h-[918px] shrink-0 border-b border-black">
        <Toolbox />
        <Workspace />
        <div className="w-[4px] shrink-0 border-x border-[#222] bg-[#3c3c3c]" />
        <RightDock />
        <ColorPalette />
      </div>
      <StatusBar />
    </div>
  );
}
